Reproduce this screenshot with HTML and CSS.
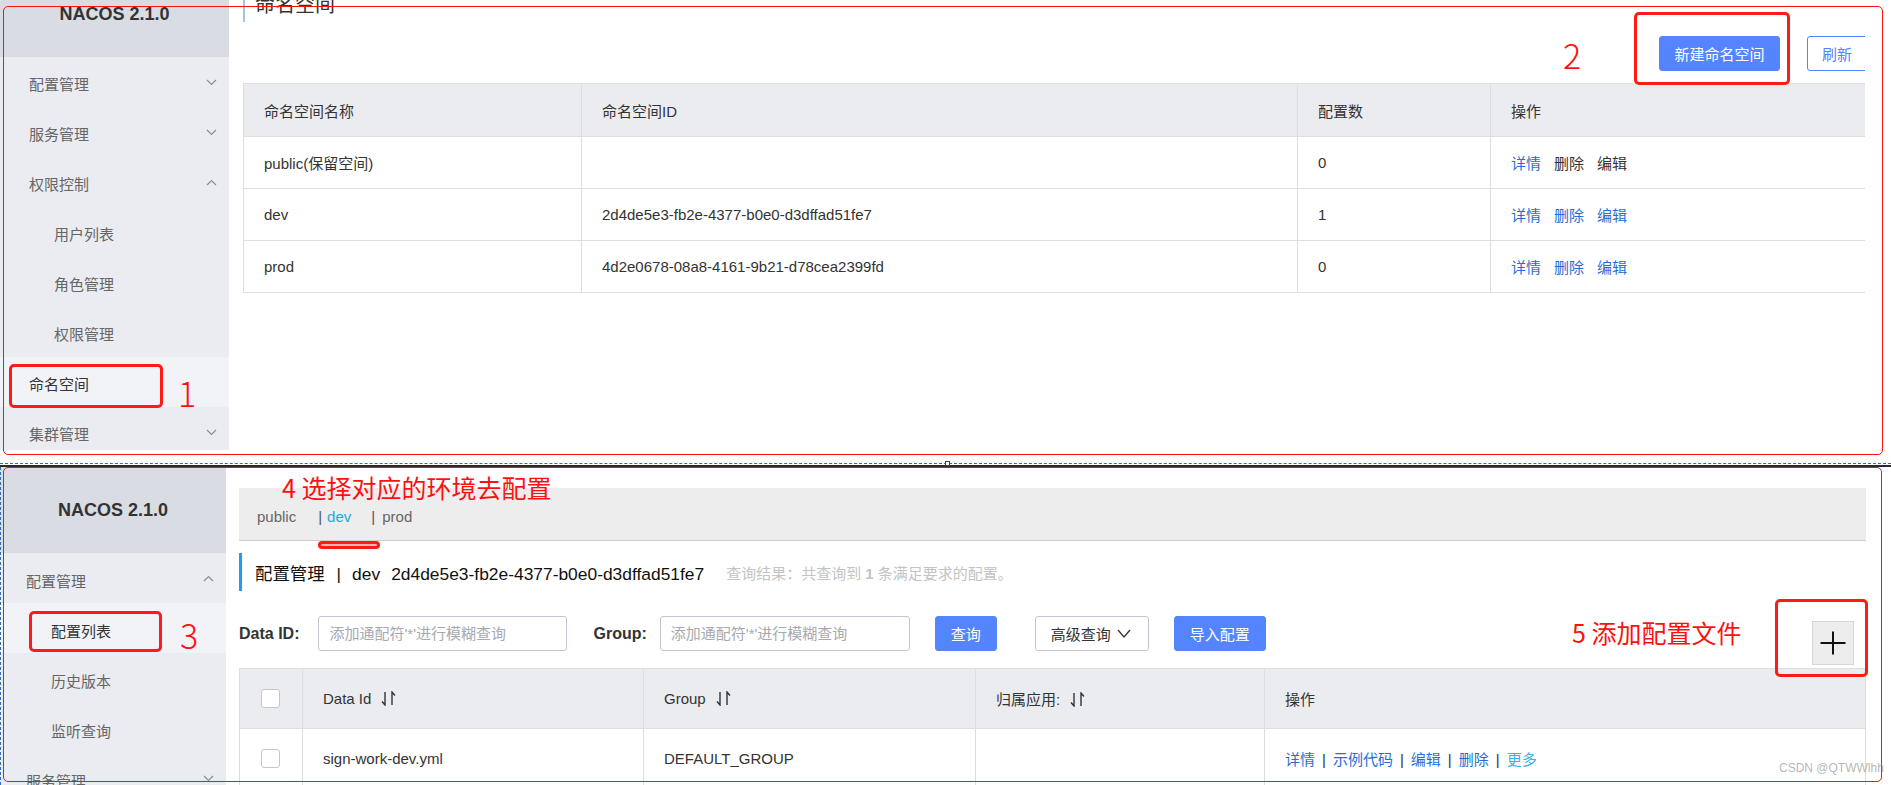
FILE: index.html
```html
<!DOCTYPE html>
<html lang="zh-CN">
<head>
<meta charset="utf-8">
<title>Nacos 命名空间</title>
<link rel="stylesheet" href="styles.css">
</head>
<body>
<section class="shot shot-top">
  <aside class="side side-top">
    <div class="logo">NACOS 2.1.0</div>
    <ul class="menu">
      <li class="menu-item">配置管理<svg class="chev" viewBox="0 0 11 7"><polyline points="1,1 5.5,5.5 10,1"/></svg></li>
      <li class="menu-item">服务管理<svg class="chev" viewBox="0 0 11 7"><polyline points="1,1 5.5,5.5 10,1"/></svg></li>
      <li class="menu-item">权限控制<svg class="chev" viewBox="0 0 11 7"><polyline points="1,6 5.5,1.5 10,6"/></svg></li>
      <li class="menu-item sub">用户列表</li>
      <li class="menu-item sub">角色管理</li>
      <li class="menu-item sub">权限管理</li>
      <li class="menu-item active">命名空间</li>
      <li class="menu-item">集群管理<svg class="chev" viewBox="0 0 11 7"><polyline points="1,1 5.5,5.5 10,1"/></svg></li>
    </ul>
  </aside>
  <main class="main main-top">
    <h2 class="page-title">命名空间</h2>
    <div class="toolbar">
      <button class="btn btn-primary btn-new">新建命名空间</button>
      <button class="btn btn-outline btn-refresh">刷新</button>
    </div>
    <table class="tbl ns-table">
      <colgroup><col style="width:338px"><col style="width:716px"><col style="width:193px"><col style="width:375px"></colgroup>
      <thead>
        <tr><th>命名空间名称</th><th>命名空间ID</th><th>配置数</th><th>操作</th></tr>
      </thead>
      <tbody>
        <tr><td>public(保留空间)</td><td></td><td>0</td><td><span class="lnk">详情</span><span class="lnk off">删除</span><span class="lnk off">编辑</span></td></tr>
        <tr><td>dev</td><td>2d4de5e3-fb2e-4377-b0e0-d3dffad51fe7</td><td>1</td><td><span class="lnk">详情</span><span class="lnk">删除</span><span class="lnk">编辑</span></td></tr>
        <tr><td>prod</td><td>4d2e0678-08a8-4161-9b21-d78cea2399fd</td><td>0</td><td><span class="lnk">详情</span><span class="lnk">删除</span><span class="lnk">编辑</span></td></tr>
      </tbody>
    </table>
  </main>
  <div class="frame frame-top"></div>
  <div class="mark-box box-ns"></div>
  <div class="mark-box box-new"></div>
  <span class="mark-num num1">1</span>
  <span class="mark-num num2">2</span>
</section>

<div class="sep"><span class="sep-handle"></span></div>

<section class="shot shot-bottom">
  <aside class="side side-bottom">
    <div class="logo">NACOS 2.1.0</div>
    <ul class="menu">
      <li class="menu-item">配置管理<svg class="chev" viewBox="0 0 11 7"><polyline points="1,6 5.5,1.5 10,6"/></svg></li>
      <li class="menu-item sub active">配置列表</li>
      <li class="menu-item sub">历史版本</li>
      <li class="menu-item sub">监听查询</li>
      <li class="menu-item">服务管理<svg class="chev" viewBox="0 0 11 7"><polyline points="1,1 5.5,5.5 10,1"/></svg></li>
    </ul>
  </aside>
  <main class="main main-bottom">
    <nav class="ns-tabs">
      <span class="ns-name">public</span>
      <span class="ns-bar">|</span>
      <span class="ns-name cur">dev</span>
      <span class="ns-bar bar2">|</span>
      <span class="ns-name">prod</span>
    </nav>
    <div class="cfg-title">
      <span class="cfg-main">配置管理<span class="pipe">|</span>dev<span class="cfg-id">2d4de5e3-fb2e-4377-b0e0-d3dffad51fe7</span></span>
      <span class="cfg-result">查询结果：共查询到 <b>1</b> 条满足要求的配置。</span>
    </div>
    <div class="search">
      <label class="lbl">Data ID:</label>
      <input class="inp inp-id" placeholder="添加通配符'*'进行模糊查询">
      <label class="lbl lbl-group">Group:</label>
      <input class="inp inp-group" placeholder="添加通配符'*'进行模糊查询">
      <button class="btn btn-primary btn-query">查询</button>
      <button class="btn btn-plain btn-adv">高级查询<svg class="adv-chev" viewBox="0 0 14 9"><polyline points="1,1 7,8 13,1"/></svg></button>
      <button class="btn btn-primary btn-import">导入配置</button>
      <button class="btn-plus"><svg viewBox="0 0 26 24"><path d="M13 0.5V23.5M0.5 12H25.5"/></svg></button>
    </div>
    <table class="tbl cfg-table">
      <colgroup><col style="width:63px"><col style="width:341px"><col style="width:332px"><col style="width:289px"><col style="width:601px"></colgroup>
      <thead>
        <tr>
          <th class="ck-cell"><span class="ck"></span></th>
          <th>Data Id<svg class="sort" viewBox="0 0 16 15"><path d="M4 1V14L1 10.5M11 14V1L14 4.5"/></svg></th>
          <th>Group<svg class="sort" viewBox="0 0 16 15"><path d="M4 1V14L1 10.5M11 14V1L14 4.5"/></svg></th>
          <th>归属应用:<svg class="sort" viewBox="0 0 16 15"><path d="M4 1V14L1 10.5M11 14V1L14 4.5"/></svg></th>
          <th>操作</th>
        </tr>
      </thead>
      <tbody>
        <tr>
          <td class="ck-cell"><span class="ck"></span></td>
          <td>sign-work-dev.yml</td>
          <td>DEFAULT_GROUP</td>
          <td></td>
          <td><span class="op">详情</span><span class="sepbar">|</span><span class="op">示例代码</span><span class="sepbar">|</span><span class="op">编辑</span><span class="sepbar">|</span><span class="op">删除</span><span class="sepbar">|</span><span class="op more">更多</span></td>
        </tr>
      </tbody>
    </table>
  </main>
  <div class="frame frame-bottom"></div>
  <div class="edge-dash"></div>
  <div class="mark-box box-list"></div>
  <div class="mark-box box-plus"></div>
  <span class="mark-num num3">3</span>
  <span class="mark-text text4">4 选择对应的环境去配置</span>
  <span class="mark-pill"></span>
  <span class="mark-text text5">5 添加配置文件</span>
  <span class="watermark">CSDN @QTWWlhh</span>
</section>
</body>
</html>
```

FILE: styles.css
```css
* { box-sizing: border-box; }
html, body { margin: 0; padding: 0; }
body {
  width: 1891px;
  height: 785px;
  overflow: hidden;
  background: #fff;
  font-family: "Liberation Sans", "Noto Sans CJK SC", sans-serif;
  font-size: 15px;
  color: #333;
}

/* ---------- shots ---------- */
.shot { position: relative; display: flex; overflow: hidden; }
.shot-top { height: 463px; }
.shot-bottom { height: 318px; }

.sep {
  position: relative;
  height: 4px;
  border-top: 1px dashed #2f6db5;
  border-bottom: 2px solid #2a2a2a;
}
.sep-handle {
  position: absolute;
  left: 945px;
  top: -3px;
  width: 5px;
  height: 5px;
  border: 1px solid #444;
  background: #fff;
}

/* ---------- sidebar ---------- */
.side { flex: none; background: #eaecf1; align-self: flex-start; overflow: hidden; }
.side-top { width: 229px; height: 450px; }
.side-bottom { width: 226px; height: 318px; }
.logo {
  height: 86px;
  background: #d9dce3;
  display: flex;
  align-items: center;
  justify-content: center;
  font-weight: bold;
  font-size: 18px;
  color: #333;
}
.side-top .logo { margin-top: -29px; }
.menu { list-style: none; margin: 0; padding: 0; }
.menu-item {
  height: 50px;
  display: flex;
  align-items: center;
  justify-content: space-between;
  padding: 3px 12px 0 29px;
  color: #666;
}
.menu-item.sub { padding-left: 54px; }
.side-bottom .menu-item { padding-left: 26px; padding-top: 4px; }
.side-bottom .menu-item.sub { padding-left: 51px; }
.menu-item.active { background: #f2f3f7; color: #333; }
.chev {
  width: 11px;
  height: 7px;
  margin-top: -3px;
  fill: none;
  stroke: #8a8d94;
  stroke-width: 1.2;
}

/* ---------- main (top) ---------- */
.main { flex: none; overflow: hidden; }
.main-top { width: 1636px; padding-left: 14px; }
.page-title {
  margin: -12px 0 0;
  height: 34px;
  line-height: 34px;
  border-left: 2px solid #a9c1de;
  padding-left: 10px;
  font-size: 20px;
  font-weight: normal;
  color: #333;
}
.toolbar {
  display: flex;
  justify-content: flex-end;
  gap: 27px;
  margin: 14px -16px 0 0;
  height: 35px;
}
.btn {
  font: inherit;
  height: 35px;
  border-radius: 3px;
  padding: 0;
  cursor: pointer;
}
.btn-primary { background: #5584ff; border: 1px solid #5584ff; color: #fff; }
.btn-outline { background: #fff; border: 1px solid #5584ff; color: #5584ff; }
.btn-plain { background: #fff; border: 1px solid #c4c6cf; color: #333; }
.btn-new { width: 121px; }
.btn-refresh { width: 74px; text-align: left; padding-left: 14px; }

.tbl { border-collapse: collapse; table-layout: fixed; }
.tbl th, .tbl td {
  border: 1px solid #dcdee3;
  text-align: left;
  padding: 0 0 0 20px;
  font-weight: normal;
  color: #333;
  white-space: nowrap;
}
.tbl th { background: #ebecf0; }
.ns-table { width: 1622px; margin-top: 12px; }
.ns-table th { height: 53px; }
.ns-table td { height: 52px; }
.lnk { color: #1f6fd6; margin-right: 13px; }
.lnk.off { color: #333; }

/* ---------- main (bottom) ---------- */
.main-bottom { width: 1640px; padding-left: 13px; }
.ns-tabs {
  margin-top: 21px;
  height: 53px;
  width: 1627px;
  background: #ededed;
  border-bottom: 1px solid #d0d0d0;
  display: flex;
  align-items: center;
  padding: 4px 0 0 18px;
  color: #666;
}
.ns-name.cur { color: #1fa9de; }
.ns-bar { margin: 0 5px 0 22px; color: #555; }
.ns-bar.bar2 { margin: 0 7px 0 20px; }

.cfg-title {
  margin-top: 12px;
  height: 38px;
  border-left: 3px solid #209bfa;
  padding-left: 13px;
  display: flex;
  align-items: center;
}
.cfg-main { font-size: 17.4px; color: #111; }
.pipe { margin: 0 11px 0 12px; }
.cfg-id { margin-left: 11px; }
.cfg-result { margin-left: 22px; font-size: 15px; color: #c3c3c3; }
.cfg-result b { font-weight: bold; }

.search {
  margin-top: 25px;
  display: flex;
  align-items: flex-start;
  height: 49px;
}
.lbl { font-weight: bold; font-size: 16px; color: #333; line-height: 35px; }
.inp {
  font: inherit;
  height: 35px;
  border: 1px solid #c4c6cf;
  border-radius: 3px;
  padding: 0 0 0 10px;
  color: #333;
  outline: none;
}
.inp::placeholder { color: #a7a9b0; }
.inp-id { width: 249px; margin-left: 19px; }
.lbl-group { margin-left: 26px; }
.inp-group { width: 250px; margin-left: 13px; }
.btn-query { width: 62px; margin-left: 25px; }
.btn-adv {
  width: 114px;
  margin-left: 38px;
  display: flex;
  align-items: center;
  padding-left: 15px;
}
.adv-chev {
  width: 14px;
  height: 9px;
  margin-left: 6px;
  fill: none;
  stroke: #333;
  stroke-width: 1.3;
}
.btn-import { width: 92px; margin-left: 25px; }
.btn-plus {
  margin: 5px 12px 0 auto;
  width: 42px;
  height: 44px;
  background: #ededed;
  border: 1px solid #d6d6d6;
  padding: 0;
  display: flex;
  align-items: center;
  justify-content: center;
}
.btn-plus svg { width: 26px; height: 24px; fill: none; stroke: #111; stroke-width: 2; }

.cfg-table { width: 1626px; margin-top: 3px; }
.cfg-table th, .cfg-table td { height: 60px; }
.tbl .ck-cell { padding-left: 21px; }
.ck {
  display: block;
  width: 19px;
  height: 19px;
  border: 1px solid #c4c6cf;
  border-radius: 3px;
  background: #fff;
}
.sort {
  width: 16px;
  height: 15px;
  margin-left: 10px;
  vertical-align: -2px;
  fill: none;
  stroke: #333;
  stroke-width: 1.4;
}
.op { color: #1f6fd6; }
.op.more { color: #33b5e5; }
.sepbar { margin: 0 7px 0 7px; color: #333; }

/* ---------- annotations (overlays) ---------- */
.frame { position: absolute; border: 1px solid #ff1010; border-radius: 5px; pointer-events: none; }
.frame-top { left: 3px; top: 6px; width: 1880px; height: 449px; }
.frame-bottom { left: 3px; top: 0; width: 1879px; height: 315px; }
.edge-dash { position: absolute; left: 0; top: 0; bottom: 0; border-left: 1px dashed #2f6db5; }
.mark-box { position: absolute; border: 3px solid #ff1a1a; border-radius: 5px; }
.box-ns { left: 9px; top: 364px; width: 154px; height: 44px; }
.box-new { left: 1634px; top: 12px; width: 156px; height: 73px; }
.box-list { left: 29px; top: 144px; width: 133px; height: 41px; }
.box-plus { left: 1775px; top: 132px; width: 93px; height: 78px; }
.mark-num {
  position: absolute;
  font-family: "Noto Sans CJK SC", "Liberation Sans", sans-serif;
  font-weight: 300;
  font-size: 34px;
  line-height: 1;
  color: #ff1010;
}
.num1 { left: 178px; top: 376px; }
.num2 { left: 1563px; top: 38px; }
.num3 { left: 180px; top: 151px; }
.mark-text {
  position: absolute;
  font-family: "Noto Sans CJK SC", sans-serif;
  font-size: 25px;
  line-height: 1;
  color: #ff1010;
  white-space: nowrap;
}
.text4 { left: 282px; top: 8px; }
.text5 { left: 1572px; top: 153px; }
.mark-pill {
  position: absolute;
  left: 318px;
  top: 74px;
  width: 62px;
  height: 8px;
  border: 3px solid #ff1a1a;
  border-radius: 4px;
  background: #ffb3b3;
}
.watermark {
  position: absolute;
  left: 1779px;
  top: 294px;
  font-size: 12px;
  color: rgba(140, 140, 140, 0.65);
  white-space: nowrap;
}
```
